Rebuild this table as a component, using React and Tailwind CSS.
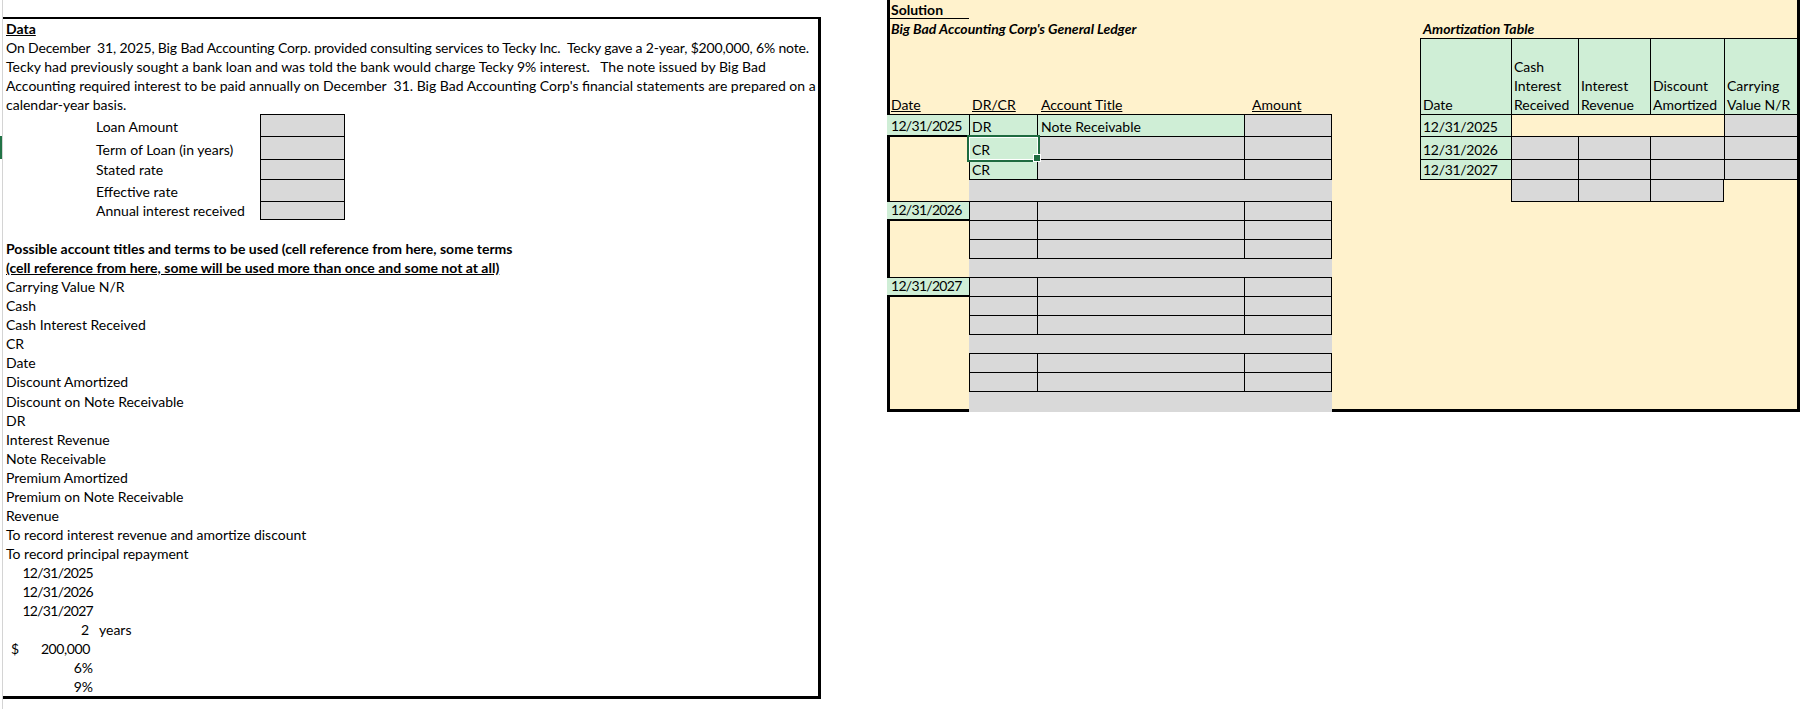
import React from "react";

// fixed heights, written out so tailwind picks them up
const H = {
  18: "h-[18px]",
  19: "h-[19px]",
  20: "h-[20px]",
  21: "h-[21px]",
  22: "h-[22px]",
  23: "h-[23px]",
};

const GREEN = "bg-[#cfeed6]";
const GRAY = "bg-[#d9d9d9]";
const DATE = "tracking-[-0.7px]";

const description = [
  "On December  31, 2025, Big Bad Accounting Corp. provided consulting services to Tecky Inc.  Tecky gave a 2-year, $200,000, 6% note.",
  "Tecky had previously sought a bank loan and was told the bank would charge Tecky 9% interest.   The note issued by Big Bad",
  "Accounting required interest to be paid annually on December  31. Big Bad Accounting Corp's financial statements are prepared on a",
  "calendar-year basis.",
];

const inputs = [
  { label: "Loan Amount", h: 22 },
  { label: "Term of Loan (in years)", h: 23 },
  { label: "Stated rate", h: 20 },
  { label: "Effective rate", h: 22 },
  { label: "Annual interest received", h: 19 },
];

const terms = [
  "Carrying Value N/R",
  "Cash",
  "Cash Interest Received",
  "CR",
  "Date",
  "Discount Amortized",
  "Discount on Note Receivable",
  "DR",
  "Interest Revenue",
  "Note Receivable",
  "Premium Amortized",
  "Premium on Note Receivable",
  "Revenue",
  "To record interest revenue and amortize discount",
  "To record principal repayment",
];

const ledger = [
  { h: 22, date: "12/31/2025", dateTop: true, dr: "DR", acct: "Note Receivable" },
  { h: 23, dateTop: true, dr: "CR", selected: true },
  { h: 20, dr: "CR" },
  { h: 22, merged: true },
  { h: 19, date: "12/31/2026", dateTop: true },
  { h: 19, dateTop: true },
  { h: 19 },
  { h: 19, merged: true },
  { h: 19, date: "12/31/2027", dateTop: true },
  { h: 19, dateTop: true },
  { h: 19 },
  { h: 19, merged: true },
  { h: 19 },
  { h: 19 },
  { h: 18, merged: true, last: true },
];

function RowHeaderStrip() {
  return (
    <div className="w-[3px] h-[709px] shrink-0 border-r border-[#d4d4d4]">
      <div className="mt-[136px] h-[23px] w-[2px] bg-[#217346]" />
    </div>
  );
}

function DataPanel() {
  return (
    <div className="w-[818px] shrink-0 mt-[17px] border-t-2 border-r-[3px] border-b-[3px] border-black">
      <div className="h-[19px] pl-[3px] font-bold underline">Data</div>
      {description.map((line, i) => (
        <div key={i} className={`h-[19px] pl-[3px] whitespace-pre ${i === 0 ? "tracking-[-0.15px]" : ""}`}>
          {line}
        </div>
      ))}

      {/* inputs the student fills in */}
      {inputs.map((row, i) => (
        <div key={row.label} className={`flex ${H[row.h]}`}>
          <div className="w-[90px]" />
          <div className="w-[167px] pl-[3px] self-end">{row.label}</div>
          <div
            className={`w-[85px] ${GRAY} border-x border-t border-black ${
              i === inputs.length - 1 ? "border-b" : ""
            }`}
          />
        </div>
      ))}

      <div className="h-[19px]" />
      <div className="h-[19px] pl-[3px] font-bold whitespace-nowrap">
        Possible account titles and terms to be used (cell reference from here, some terms
      </div>
      <div className="h-[19px] pl-[3px] font-bold underline whitespace-nowrap">
        (cell reference from here, some will be used more than once and some not at all)
      </div>
      {terms.map((t) => (
        <div
          key={t}
          className={`pl-[3px] flex items-end ${t === "Discount on Note Receivable" ? "h-[20px]" : "h-[19px]"}`}
        >
          {t}
        </div>
      ))}
      {["12/31/2025", "12/31/2026", "12/31/2027"].map((d) => (
        <div key={d} className={`h-[19px] w-[93px] text-right pr-[3px] ${DATE}`}>
          {d}
        </div>
      ))}
      <div className="h-[19px] flex">
        <div className="w-[90px] text-right pr-[4px]">2</div>
        <div className="pl-[6px]">years</div>
      </div>
      <div className="h-[19px] w-[90px] flex">
        <span className="pl-[8px]">$</span>
        <span className="ml-auto pr-[3px] tracking-[-0.4px]">200,000</span>
      </div>
      <div className="h-[19px] w-[93px] text-right pr-[3px]">6%</div>
      <div className="h-[19px] w-[93px] text-right pr-[3px]">9%</div>
    </div>
  );
}

function Selection() {
  return (
    <div className="absolute z-10 left-[-3px] top-[-2px] w-[73px] h-[27px] border-[2px] border-[#1e6b40] shadow-[inset_0_0_0_1px_white]">
      <div className="absolute left-[64px] top-[17px] w-[8px] h-[8px] bg-[#1e6b40] border border-white" />
    </div>
  );
}

function Ledger() {
  return (
    <div className="w-[445px] shrink-0 flex flex-col">
      <div className="h-[114px] border-l-[3px] border-black">
        <div className="h-[19px] w-[79px] pl-[1px] border-b border-black font-bold">Solution</div>
        <div className="h-[19px] pl-[1px] font-bold italic whitespace-nowrap">
          Big Bad Accounting Corp's General Ledger
        </div>
        <div className="h-[57px]" />
        <div className="h-[19px] flex">
          <div className="w-[79px] pl-[1px]">
            <span className="underline">Date</span>
          </div>
          <div className="w-[68px] pl-[3px]">
            <span className="underline">DR/CR</span>
          </div>
          <div className="w-[207px] pl-[4px]">
            <span className="underline">Account Title</span>
          </div>
          <div className="w-[88px] pl-[8px]">
            <span className="underline">Amount</span>
          </div>
        </div>
      </div>

      {ledger.map((r, i) => (
        <div key={i} className={`flex ${H[r.h]}`}>
          {r.date ? (
            <div className={`w-[82px] ${GREEN} pl-[4px] flex items-end border-y border-black ${DATE}`}>
              {r.date}
            </div>
          ) : (
            <div className={`w-[82px] border-l-[3px] border-black ${r.dateTop ? "border-t" : ""}`} />
          )}
          {r.merged ? (
            <div className={`w-[363px] ${GRAY} border-t border-black ${r.last ? "h-[21px] shrink-0" : ""}`} />
          ) : (
            <>
              <div
                className={`relative w-[68px] border-l border-t border-black pl-[2px] flex items-end ${
                  r.dr ? GREEN : GRAY
                }`}
              >
                {r.dr}
                {r.selected && <Selection />}
              </div>
              <div
                className={`w-[207px] border-l border-t border-black pl-[3px] flex items-end ${
                  r.acct ? GREEN : GRAY
                }`}
              >
                {r.acct}
              </div>
              <div className={`w-[88px] border-x border-t border-black ${GRAY}`} />
            </>
          )}
        </div>
      ))}
    </div>
  );
}

function AmortizationTable() {
  const rows = [
    { h: 22, date: "12/31/2025", first: true },
    { h: 23, date: "12/31/2026" },
    { h: 20, date: "12/31/2027" },
  ];
  return (
    <div className="ml-[88px] w-[377px] shrink-0">
      <div className="h-[19px]" />
      <div className="h-[19px] pl-[3px] font-bold italic whitespace-nowrap">Amortization Table</div>

      {/* header */}
      <div className={`flex h-[76px] ${GREEN}`}>
        <div className="w-[91px] border-l border-t border-black pl-[2px] flex items-end">Date</div>
        <div className="w-[67px] border-l border-t border-black pl-[2px] flex items-end">
          Cash
          <br />
          Interest
          <br />
          Received
        </div>
        <div className="w-[72px] border-l border-t border-black pl-[2px] flex items-end">
          Interest
          <br />
          Revenue
        </div>
        <div className="w-[74px] border-l border-t border-black pl-[2px] flex items-end">
          Discount
          <br />
          Amortized
        </div>
        <div className="w-[73px] border-l border-t border-black pl-[2px] flex items-end whitespace-nowrap">
          Carrying
          <br />
          Value N/R
        </div>
      </div>

      {rows.map((r) => (
        <div key={r.date} className={`flex ${H[r.h]}`}>
          <div className={`w-[91px] ${GREEN} border-l border-t border-black pl-[2px] flex items-end tracking-[-0.3px]`}>
            {r.date}
          </div>
          {r.first ? (
            <div className="w-[213px] border-l border-t border-black" />
          ) : (
            <>
              <div className={`w-[67px] ${GRAY} border-l border-t border-black`} />
              <div className={`w-[72px] ${GRAY} border-l border-t border-black`} />
              <div className={`w-[74px] ${GRAY} border-l border-t border-black`} />
            </>
          )}
          <div className={`w-[73px] ${GRAY} border-l border-t border-black`} />
        </div>
      ))}

      <div className="flex h-[23px]">
        <div className="w-[91px] border-t border-black" />
        <div className={`w-[67px] ${GRAY} border-l border-y border-black`} />
        <div className={`w-[72px] ${GRAY} border-l border-y border-black`} />
        <div className={`w-[74px] ${GRAY} border-x border-y border-black`} />
        <div className="w-[73px] border-t border-black" />
      </div>
    </div>
  );
}

function SolutionPanel() {
  return (
    <div className="ml-[66px] w-[913px] h-[412px] shrink-0 bg-[#fff2cc] border-r-[3px] border-b-[3px] border-black flex items-start">
      <Ledger />
      <AmortizationTable />
    </div>
  );
}

export default function App() {
  return (
    <div className="w-[1810px] h-[709px] bg-white overflow-hidden flex items-start font-['Lato','Liberation_Sans',sans-serif] text-[14px] leading-[19px] text-black">
      <RowHeaderStrip />
      <DataPanel />
      <SolutionPanel />
    </div>
  );
}
